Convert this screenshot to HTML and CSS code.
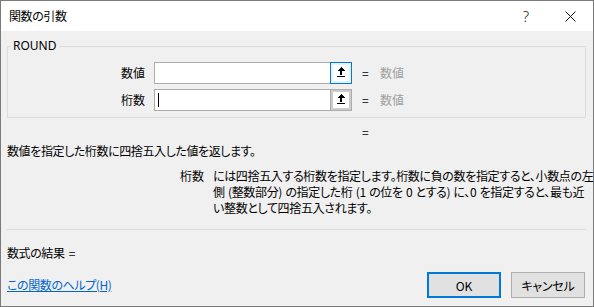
FILE: index.html
```html
<!DOCTYPE html>
<html lang="ja">
<head>
<meta charset="utf-8">
<title>関数の引数</title>
<link rel="stylesheet" href="styles.css">
</head>
<body>
<div class="dialog">
  <div class="titlebar">
    <span class="title">関数の引数</span>
    <span class="cap-btn cap-help">?</span>
    <span class="cap-btn cap-close">
      <svg width="11" height="11" viewBox="0 0 11 11"><path d="M0.5 0.5L10.5 10.5M10.5 0.5L0.5 10.5" stroke="#111" stroke-width="1"/></svg>
    </span>
  </div>
  <div class="content">
    <div class="group">
      <span class="legend">ROUND</span>
      <div class="row">
        <span class="arg-label">数値</span>
        <div class="field">
          <div class="field-text"></div>
          <div class="collapse collapse-focused">
            <span class="collapse-inner">
              <svg width="8" height="10" viewBox="0 0 8 10" shape-rendering="crispEdges"><path d="M4 0L8 4L5 4L5 8L3 8L3 4L0 4Z" fill="#000"/><rect x="0" y="9" width="8" height="1" fill="#000"/></svg>
            </span>
          </div>
        </div>
        <span class="eq">=</span>
        <span class="value">数値</span>
      </div>
      <div class="row">
        <span class="arg-label">桁数</span>
        <div class="field">
          <div class="field-text"><span class="caret"></span></div>
          <div class="collapse collapse-idle">
            <span class="collapse-inner">
              <svg width="8" height="10" viewBox="0 0 8 10" shape-rendering="crispEdges"><path d="M4 0L8 4L5 4L5 8L3 8L3 4L0 4Z" fill="#000"/><rect x="0" y="9" width="8" height="1" fill="#000"/></svg>
            </span>
          </div>
        </div>
        <span class="eq">=</span>
        <span class="value">数値</span>
      </div>
    </div>
    <div class="result-eq">=</div>
    <p class="func-desc">数値を指定した桁数に四捨五入した値を返します。</p>
    <div class="arg-desc">
      <span class="arg-name">桁数</span>
      <p class="arg-text">には四捨五入する桁数を指定します。桁数に負の数を指定すると、小数点の左<br>側 (整数部分) の指定した桁 (1 の位を 0 とする) に、0 を指定すると、最も近<br>い整数として四捨五入されます。</p>
    </div>
    <div class="sep"></div>
    <div class="formula-result">数式の結果 =</div>
    <div class="footer">
      <a class="help-link" href="#">この関数のヘルプ(H)</a>
      <div class="buttons">
        <button class="btn btn-default">OK</button>
        <button class="btn">キャンセル</button>
      </div>
    </div>
  </div>
</div>
</body>
</html>
```

FILE: styles.css
```css
* { box-sizing: border-box; }

html, body {
  margin: 0;
  padding: 0;
  background: #f0f0f0;
}

body {
  font-family: "Noto Sans CJK JP", "Noto Sans", sans-serif;
  font-size: 12px;
  line-height: 16px;
  color: #000;
  font-feature-settings: "palt";
  letter-spacing: -0.4px;
}

.dialog {
  width: 594px;
  height: 307px;
  border: 1px solid #7a7a7a;
  background: #f0f0f0;
  display: flex;
  flex-direction: column;
}

.titlebar {
  height: 30px;
  background: #fff;
  display: flex;
  align-items: center;
  padding-left: 8px;
  flex: none;
}

.title {
  flex: 1;
  font-size: 12px;
}

.cap-btn {
  width: 46px;
  height: 30px;
  display: flex;
  align-items: center;
  justify-content: center;
}

.cap-help {
  font-family: "Noto Sans", sans-serif;
  font-size: 15px;
  color: #222;
  font-weight: 300;
  padding-left: 4px;
  letter-spacing: 0;
}

.content {
  padding: 0 7px 0 6px;
  display: flex;
  flex-direction: column;
  flex: 1;
}

.group {
  position: relative;
  margin-top: 15px;
  border: 1px solid #dcdcdc;
  padding: 15px 0 6px;
  display: flex;
  flex-direction: column;
  gap: 5px;
}

.legend {
  position: absolute;
  top: -9px;
  left: 3px;
  padding: 0 2px;
  background: #f0f0f0;
  font-family: "Noto Sans", sans-serif;
  font-size: 12px;
  line-height: 16px;
  letter-spacing: 0;
}

.row {
  display: flex;
  align-items: center;
  height: 22px;
}

.arg-label {
  width: 137px;
  text-align: right;
  margin-right: 9px;
  letter-spacing: 0;
}

.field {
  width: 198px;
  height: 22px;
  display: flex;
}

.field-text {
  flex: 1;
  background: #fff;
  border: 1px solid #acacac;
  border-right: none;
  display: flex;
  align-items: center;
  padding-left: 3px;
}

.caret {
  width: 1px;
  height: 14px;
  background: #000;
}

.collapse {
  width: 22px;
  height: 22px;
  display: flex;
  align-items: center;
  justify-content: center;
}

.collapse-focused {
  border: 1px solid #0078d7;
  background: #e5f1fb;
}

.collapse-idle {
  border: 1px solid #adadad;
  background: #cccccc;
}

.collapse-inner {
  width: 16px;
  height: 16px;
  background: #fff;
  display: flex;
  align-items: flex-start;
  justify-content: center;
  padding-top: 2px;
}

.eq {
  margin-left: 10px;
  width: 12px;
}

.value {
  margin-left: 6px;
  color: #a0a0a0;
  letter-spacing: 0;
}

.result-eq {
  margin-top: 6px;
  margin-left: 355px;
}

.func-desc {
  margin: 3px 0 0;
}

.arg-desc {
  display: flex;
  margin-top: 9px;
}

.arg-name {
  width: 197px;
  text-align: right;
  flex: none;
  letter-spacing: 0;
}

.arg-text {
  margin: 0 0 0 9px;
  white-space: nowrap;
  letter-spacing: -0.35px;
  word-spacing: 1px;
}

.sep {
  height: 1px;
  background: #dcdcdc;
  margin-top: 13px;
}

.formula-result {
  margin-top: 15px;
  word-spacing: 2px;
}

.footer {
  margin-top: 11px;
  display: flex;
  align-items: center;
  justify-content: space-between;
}

.help-link {
  color: #0066cc;
  text-decoration: underline;
}

.buttons {
  display: flex;
  gap: 10px;
  margin-right: 1px;
}

.btn {
  width: 74px;
  height: 26px;
  background: #e1e1e1;
  border: 1px solid #adadad;
  font-family: "Noto Sans CJK JP", "Noto Sans", sans-serif;
  font-size: 12px;
  font-feature-settings: "palt";
  letter-spacing: -0.2px;
  color: #000;
  padding: 0;
}

.btn-default {
  border: 2px solid #0078d7;
}
```
